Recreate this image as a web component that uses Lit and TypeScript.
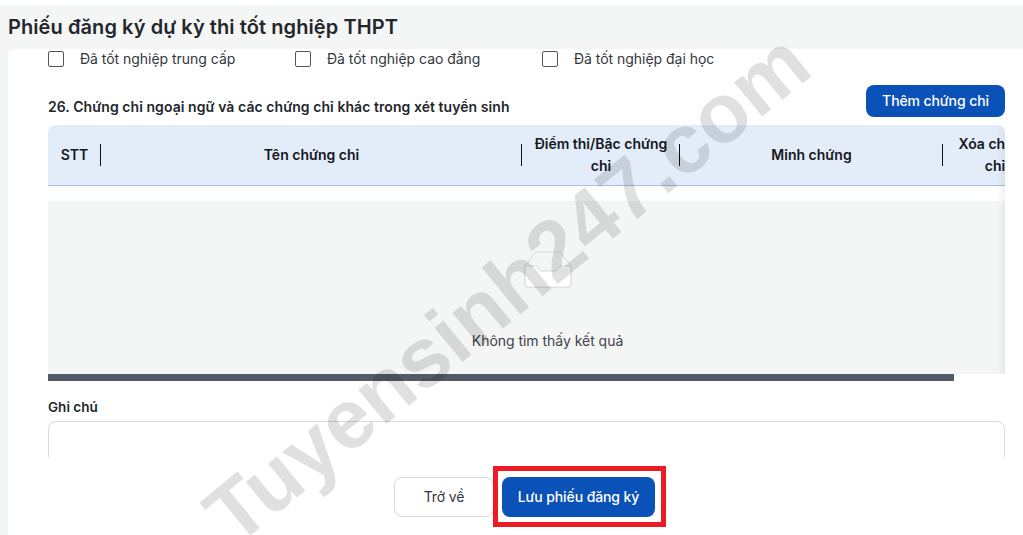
import { LitElement, html, css } from "lit";
import { customElement } from "lit/decorators.js";

@customElement("app-root")
export class AppRoot extends LitElement {
  static styles = css`
    :host { display: block; position: relative; width: 1023px; height: 535px; overflow: hidden; background: #fff; font-family: Inter, "Liberation Sans", sans-serif; color: #1f2229; font-size: 14px; }
    .page { height: 530px; margin-top: 5px; background: #f4f6f6; display: flex; flex-direction: column; }
    .title { height: 44px; display: flex; align-items: center; padding-left: 8px; font-size: 20px; font-weight: 600; letter-spacing: .08px; line-height: 44px; color: #23262b; flex: none; }
    .card { flex: 1; margin-left: 8px; background: #fff; border-top-left-radius: 8px; padding: 0 18px 0 40px; display: flex; flex-direction: column; min-height: 0; }
    .checks { display: flex; height: 20px; line-height: 20px; color: #33373d; letter-spacing: -.03px; }
    .check { display: flex; align-items: center; gap: 16px; }
    .check:nth-child(1) { width: 247px; }
    .check:nth-child(2) { width: 247px; }
    .box { width: 14px; height: 14px; border: 1px solid #555; border-radius: 2px; background: #fff; }
    .head { display: flex; justify-content: space-between; align-items: flex-end; margin-top: 16px; margin-bottom: 8px; height: 32px; }
    .head span { font-weight: 600; font-size: 14px; letter-spacing: .06px; line-height: 20px; color: #23262b; }
    .btn { border-radius: 8px; display: flex; align-items: center; justify-content: center; font-size: 14px; font-weight: 500; letter-spacing: -.1px; padding-bottom: 1px; box-sizing: border-box; }
    .primary { background: #0b52b8; color: #fff; }
    .add { width: 139px; height: 32px; }
    .table { position: relative; width: 957px; height: 256px; overflow: hidden; background: #fff; border-top-left-radius: 8px; border-top-right-radius: 8px; flex: none; }
    .thead { display: grid; grid-template-columns: 53px 421px 158px 263px 104px; width: 999px; height: 60px; background: #e3edf9; border-bottom: 1px solid #a4bfe6; }
    .th { position: relative; display: flex; align-items: center; justify-content: center; text-align: center; font-weight: 600; line-height: 22px; color: #14171c; padding: 0 12px; box-sizing: border-box; }
    .th.div::after { content: ""; position: absolute; right: 0; top: 19px; height: 22px; width: 1px; background: #111; }
    .empty { width: 999px; height: 173px; margin-top: 15px; background: #f4f6f6; display: flex; flex-direction: column; align-items: center; box-sizing: border-box; padding-top: 50px; color: #3f434a; letter-spacing: -.03px; }
    .empty svg { display: block; flex: none; }
    .empty p { margin: 0; margin-top: 43px; line-height: 20px; }
    .bar { height: 7px; width: 906px; background: #555b66; }
    .edge { position: absolute; right: 0; top: 0; bottom: 7px; width: 8px; background: linear-gradient(90deg, rgba(0,0,0,0), rgba(0,0,0,.05)); }
    label { display: block; margin-top: 16px; line-height: 20px; font-weight: 600; font-size: 13.5px; color: #23262b; }
    .note { height: 36px; margin-top: 4px; overflow: hidden; flex: none; }
    .note div { height: 80px; border: 1px solid #d9d9d9; border-radius: 8px; box-sizing: border-box; }
    .foot { display: flex; justify-content: flex-start; gap: 8px; margin-top: 20px; padding-left: 346px; }
    .back { width: 100px; height: 40px; border: 1px solid #d9d9d9; background: #fff; color: #33373d; font-weight: 400; }
    .save { width: 153px; height: 40px; }
    .mark { position: absolute; left: 507px; top: 288px; transform: translate(-50%, -50%) rotate(-39.3deg); font: 700 84px "Liberation Sans", Arial, sans-serif; color: rgba(0,0,0,.12); white-space: nowrap; pointer-events: none; line-height: 1; }
    .red { position: absolute; left: 493px; top: 466px; width: 173px; height: 61px; box-sizing: border-box; border: 5px solid #ed1c24; pointer-events: none; }
  `;

  render() {
    return html`
      <div class="page">
        <div class="title">Phiếu đăng ký dự kỳ thi tốt nghiệp THPT</div>
        <div class="card">
          <div class="checks">
            <div class="check"><i class="box"></i>Đã tốt nghiệp trung cấp</div>
            <div class="check"><i class="box"></i>Đã tốt nghiệp cao đẳng</div>
            <div class="check"><i class="box"></i>Đã tốt nghiệp đại học</div>
          </div>
          <div class="head">
            <span>26. Chứng chỉ ngoại ngữ và các chứng chỉ khác trong xét tuyển sinh</span>
            <div class="btn primary add">Thêm chứng chỉ</div>
          </div>
          <div class="table">
            <div class="thead">
              <div class="th div">STT</div>
              <div class="th div">Tên chứng chỉ</div>
              <div class="th div">Điểm thi/Bậc chứng chỉ</div>
              <div class="th div">Minh chứng</div>
              <div class="th">Xóa chứng chỉ</div>
            </div>
            <div class="empty">
              <svg width="48" height="37" viewBox="0 0 48 37" fill="none">
                <path d="M1 15 L11 2 Q12 1 13 1 H35 Q36 1 37 2 L47 15 V33 Q47 36 44 36 H4 Q1 36 1 33 Z" stroke="#d9d9d9" stroke-width="1" fill="#f4f6f6"/>
                <path d="M1 15 H12 Q14 15 14 17 Q15 20 17 20 H31 Q33 20 34 17 Q34 15 36 15 H47 V33 Q47 36 44 36 H4 Q1 36 1 33 Z" stroke="#d9d9d9" stroke-width="1" fill="#fff"/>
              </svg>
              <p>Không tìm thấy kết quả</p>
            </div>
            <div class="bar"></div>
            <div class="edge"></div>
          </div>
          <label>Ghi chú</label>
          <div class="note"><div></div></div>
          <div class="foot">
            <div class="btn back">Trở về</div>
            <div class="btn primary save">Lưu phiếu đăng ký</div>
          </div>
        </div>
      </div>
      <div class="mark">Tuyensinh247.com</div>
      <div class="red"></div>
    `;
  }
}
